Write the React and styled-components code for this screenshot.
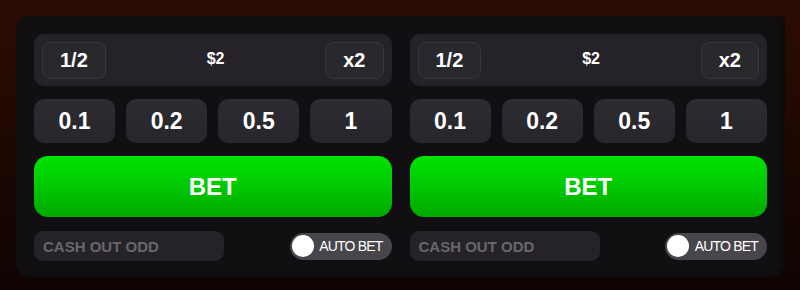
import React, { useState } from 'react'
import styled, { createGlobalStyle } from 'styled-components'

const GlobalStyle = createGlobalStyle`
  html, body {
    margin: 0;
    padding: 0;
    background: #1c0703;
  }
  body {
    font-family: "Liberation Sans", Arial, sans-serif;
  }
`

const Page = styled.div`
  width: 800px;
  height: 290px;
  box-sizing: border-box;
  padding: 16px 0 0 16px;
  background: linear-gradient(180deg, #2c0c02 0%, #220902 40%, #160502 75%, #0f0402 100%);
  overflow: hidden;
`

const Panel = styled.div`
  width: 769px;
  box-sizing: border-box;
  padding: 18px 18px 16px 18px;
  background: #110f12;
  border-radius: 14px 6px 14px 14px;
  display: grid;
  grid-template-columns: 1fr 1fr;
  column-gap: 18px;
  box-shadow: inset -4px 0 4px rgba(0, 0, 0, 0.25);
`

const Column = styled.div`
  display: flex;
  flex-direction: column;
`

const AmountBox = styled.div`
  height: 52px;
  box-sizing: border-box;
  padding: 0 8px;
  background: #252329;
  border-radius: 10px;
  display: flex;
  align-items: center;
  justify-content: space-between;
`

const StepButton = styled.button`
  height: 37px;
  padding: 0 17px;
  box-sizing: border-box;
  background: #29282d;
  border: 1px solid #38373d;
  border-radius: 8px;
  color: #fff;
  font-family: inherit;
  font-weight: 700;
  font-size: 20px;
  cursor: pointer;
`

const Amount = styled.span`
  color: #fff;
  font-weight: 700;
  font-size: 16px;
  margin-top: -2px;
`

const Chips = styled.div`
  margin-top: 13px;
  display: grid;
  grid-template-columns: repeat(4, 1fr);
  column-gap: 11px;
`

const Chip = styled.button`
  height: 44px;
  background: linear-gradient(180deg, #2d2c32 0%, #27262b 100%);
  border: none;
  border-radius: 10px;
  color: #fff;
  font-family: inherit;
  font-weight: 700;
  font-size: 23px;
  cursor: pointer;
`

const BetButton = styled.button`
  margin-top: 13px;
  height: 61px;
  border: none;
  border-radius: 14px;
  background: linear-gradient(180deg, #00e300 0%, #00c800 50%, #00a900 100%);
  color: #fff;
  font-family: inherit;
  font-weight: 700;
  font-size: 24px;
  cursor: pointer;
`

const Bottom = styled.div`
  margin-top: 14px;
  display: flex;
  align-items: center;
  justify-content: space-between;
`

const CashOut = styled.input`
  width: 190px;
  height: 30px;
  box-sizing: border-box;
  padding: 0 9px;
  border: none;
  outline: none;
  border-radius: 9px;
  background: #252328;
  color: #fff;
  font-family: inherit;
  font-weight: 700;
  font-size: 15px;

  &::placeholder {
    color: #69676c;
  }
`

const Toggle = styled.button`
  height: 27px;
  width: 102px;
  box-sizing: border-box;
  padding: 0 9px 0 2px;
  border: none;
  border-radius: 14px;
  background: #48464b;
  display: flex;
  align-items: center;
  justify-content: space-between;
  cursor: pointer;
`

const Knob = styled.span`
  width: 22px;
  height: 22px;
  border-radius: 50%;
  background: #fff;
`

const ToggleLabel = styled.span`
  color: #fff;
  font-family: "Liberation Sans", Arial, sans-serif;
  font-size: 14px;
  letter-spacing: -0.8px;
`

const BetPanel = () => {
  const [amount, setAmount] = useState(2)
  return (
    <Column>
      <AmountBox>
        <StepButton onClick={() => setAmount(amount / 2)}>1/2</StepButton>
        <Amount>${amount}</Amount>
        <StepButton onClick={() => setAmount(amount * 2)}>x2</StepButton>
      </AmountBox>
      <Chips>
        {['0.1', '0.2', '0.5', '1'].map((c) => (
          <Chip key={c} onClick={() => setAmount(Number(c))}>{c}</Chip>
        ))}
      </Chips>
      <BetButton>BET</BetButton>
      <Bottom>
        <CashOut placeholder="CASH OUT ODD" />
        <Toggle>
          <Knob />
          <ToggleLabel>AUTO BET</ToggleLabel>
        </Toggle>
      </Bottom>
    </Column>
  )
}

export default function App() {
  return (
    <>
      <GlobalStyle />
      <Page>
        <Panel>
          <BetPanel />
          <BetPanel />
        </Panel>
      </Page>
    </>
  )
}
